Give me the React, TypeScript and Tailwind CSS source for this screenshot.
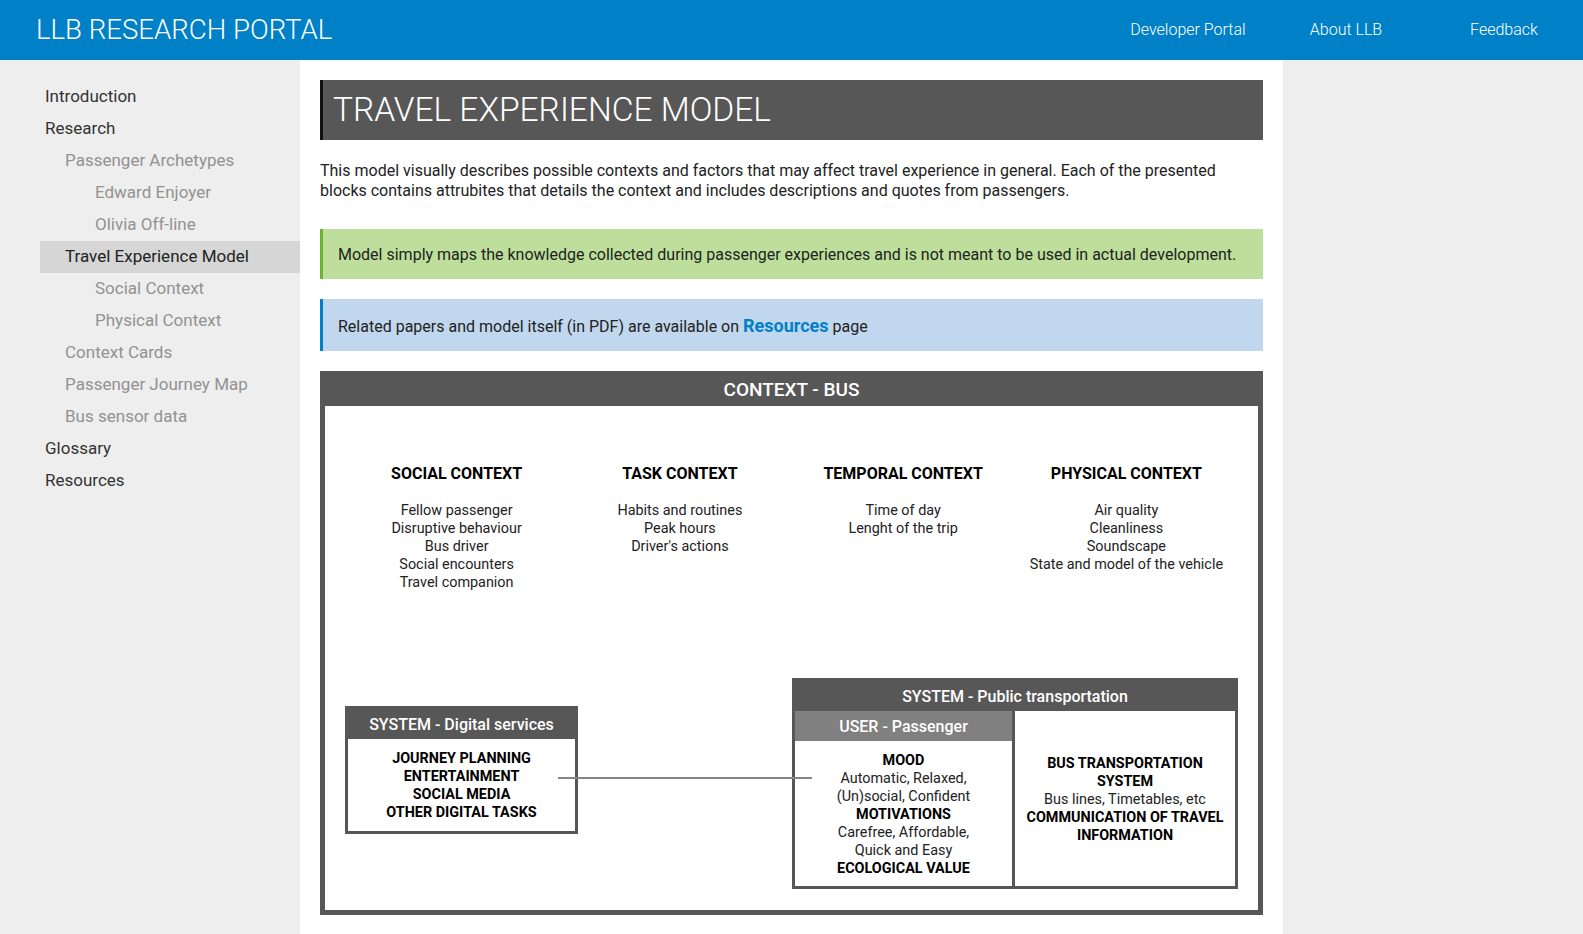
import React from "react";

const navItems = [
  { label: "Introduction", level: 1 },
  { label: "Research", level: 1 },
  { label: "Passenger Archetypes", level: 2 },
  { label: "Edward Enjoyer", level: 3 },
  { label: "Olivia Off-line", level: 3 },
  { label: "Travel Experience Model", level: 2, active: true },
  { label: "Social Context", level: 3 },
  { label: "Physical Context", level: 3 },
  { label: "Context Cards", level: 2 },
  { label: "Passenger Journey Map", level: 2 },
  { label: "Bus sensor data", level: 2 },
  { label: "Glossary", level: 1 },
  { label: "Resources", level: 1 },
];

const contexts = [
  {
    title: "SOCIAL CONTEXT",
    items: ["Fellow passenger", "Disruptive behaviour", "Bus driver", "Social encounters", "Travel companion"],
  },
  { title: "TASK CONTEXT", items: ["Habits and routines", "Peak hours", "Driver's actions"] },
  { title: "TEMPORAL CONTEXT", items: ["Time of day", "Lenght of the trip"] },
  {
    title: "PHYSICAL CONTEXT",
    items: ["Air quality", "Cleanliness", "Soundscape", "State and model of the vehicle"],
  },
];

function Sidebar() {
  return (
    <aside className="w-[300px] shrink-0 bg-[#eeeeee] pt-[21px] pl-[40px]">
      {navItems.map((item) => (
        <div
          key={item.label}
          className={
            "h-[32px] flex items-center text-[17px] " +
            (item.level === 1 ? "pl-[5px] " : item.level === 2 ? "pl-[25px] " : "pl-[55px] ") +
            (item.active
              ? "bg-[#d6d6d6] text-[#222]"
              : item.level === 1
              ? "text-[#333]"
              : "text-[#929292]")
          }
        >
          {item.label}
        </div>
      ))}
    </aside>
  );
}

function ContextModel() {
  return (
    <div className="mt-[20px] bg-[#575757] border-[5px] border-t-0 border-[#575757]">
      <div className="h-[35px] pt-[4px] flex items-center justify-center text-white text-[19px] font-medium">
        CONTEXT - BUS
      </div>
      <div className="bg-white pt-[58px] pb-[21px]">
        {/* context columns */}
        <div className="grid grid-cols-4 px-[20px] items-start">
          {contexts.map((c) => (
            <div key={c.title} className="text-center">
              <p className="text-[16px] leading-[20px] font-bold text-black">{c.title}</p>
              <div className="mt-[18px] text-[14.4px] leading-[18px] text-[#222]">
                {c.items.map((i) => (
                  <p key={i}>{i}</p>
                ))}
              </div>
            </div>
          ))}
        </div>

        {/* systems */}
        <div className="relative mt-[86px] px-[20px] flex justify-between items-start">
          <div className="mt-[28px] w-[233px] border-[3px] border-[#575757] bg-[#575757]">
            <div className="h-[30px] pt-[1px] flex items-center justify-center text-white text-[16px] font-medium">
              SYSTEM - Digital services
            </div>
            <div className="bg-white pt-[11px] pb-[9px] text-center text-[14.4px] leading-[18px] font-bold text-black">
              <p>JOURNEY PLANNING</p>
              <p>ENTERTAINMENT</p>
              <p>SOCIAL MEDIA</p>
              <p>OTHER DIGITAL TASKS</p>
            </div>
          </div>

          <div className="w-[446px] border-[3px] border-[#575757] bg-[#575757]">
            <div className="h-[30px] pt-[1px] flex items-center justify-center text-white text-[16px] font-medium">
              SYSTEM - Public transportation
            </div>
            <div className="flex gap-[3px]">
              <div className="w-[217px] bg-white">
                <div className="h-[30px] pt-[1px] bg-[#808080] flex items-center justify-center text-white text-[16px] font-medium">
                  USER - Passenger
                </div>
                <div className="pt-[11px] pb-[8px] text-center text-[14.4px] leading-[18px] text-[#222]">
                  <p className="font-bold text-black">MOOD</p>
                  <p>Automatic, Relaxed,</p>
                  <p>(Un)social, Confident</p>
                  <p className="font-bold text-black">MOTIVATIONS</p>
                  <p>Carefree, Affordable,</p>
                  <p>Quick and Easy</p>
                  <p className="font-bold text-black">ECOLOGICAL VALUE</p>
                </div>
              </div>
              <div className="flex-1 bg-white pt-[2px] flex flex-col justify-center text-center text-[14.4px] leading-[18px] text-[#222] whitespace-nowrap">
                <p className="font-bold text-black">
                  BUS TRANSPORTATION
                  <br />
                  SYSTEM
                </p>
                <p>Bus lines, Timetables, etc</p>
                <p className="font-bold text-black">
                  COMMUNICATION OF TRAVEL
                  <br />
                  INFORMATION
                </p>
              </div>
            </div>
          </div>

          {/* connector */}
          <div className="absolute left-[233px] top-[99px] w-[254px] h-[2px] bg-[#858585]" />
        </div>
      </div>
    </div>
  );
}

export default function App() {
  return (
    <div className="min-h-screen flex flex-col font-['Roboto',sans-serif]">
      <header className="h-[60px] bg-[#0080c6] flex items-center justify-between pl-[36px] text-white">
        <span className="text-[27.6px] font-light">LLB RESEARCH PORTAL</span>
        <nav className="flex">
          {["Developer Portal", "About LLB", "Feedback"].map((l) => (
            <a key={l} className="w-[158px] text-center text-[16px] font-light">
              {l}
            </a>
          ))}
        </nav>
      </header>

      <div className="flex flex-1">
        <Sidebar />

        <main className="w-[983px] shrink-0 bg-white px-[20px] pt-[20px] pb-[19px]">
          <div className="h-[60px] bg-[#575757] border-l-[3px] border-[#111] flex items-center pl-[10px]">
            <h1 className="text-[33.5px] font-light text-white">TRAVEL EXPERIENCE MODEL</h1>
          </div>

          <p className="mt-[21px] mb-[-1px] text-[16px] leading-[20px] text-[#222]">
            This model visually describes possible contexts and factors that may affect travel experience in general. Each
            of the presented blocks contains attrubites that details the context and includes descriptions and quotes from
            passengers.
          </p>

          <div className="mt-[29px] h-[50px] bg-[#bddf9b] border-l-[3px] border-[#6ab42e] flex items-center pl-[15px] pt-[1px] text-[16px] text-[#222]">
            Model simply maps the knowledge collected during passenger experiences and is not meant to be used in actual
            development.
          </div>

          <div className="mt-[20px] h-[52px] bg-[#c1d7ed] border-l-[3px] border-[#0080c6] flex items-center pl-[15px] text-[16px] text-[#222]">
            <span>
              Related papers and model itself (in PDF) are available on{" "}
              <a className="text-[18px] font-bold text-[#0080c6]">Resources</a> page
            </span>
          </div>

          <ContextModel />
        </main>

        <div className="flex-1 bg-[#eeeeee]" />
      </div>
    </div>
  );
}
